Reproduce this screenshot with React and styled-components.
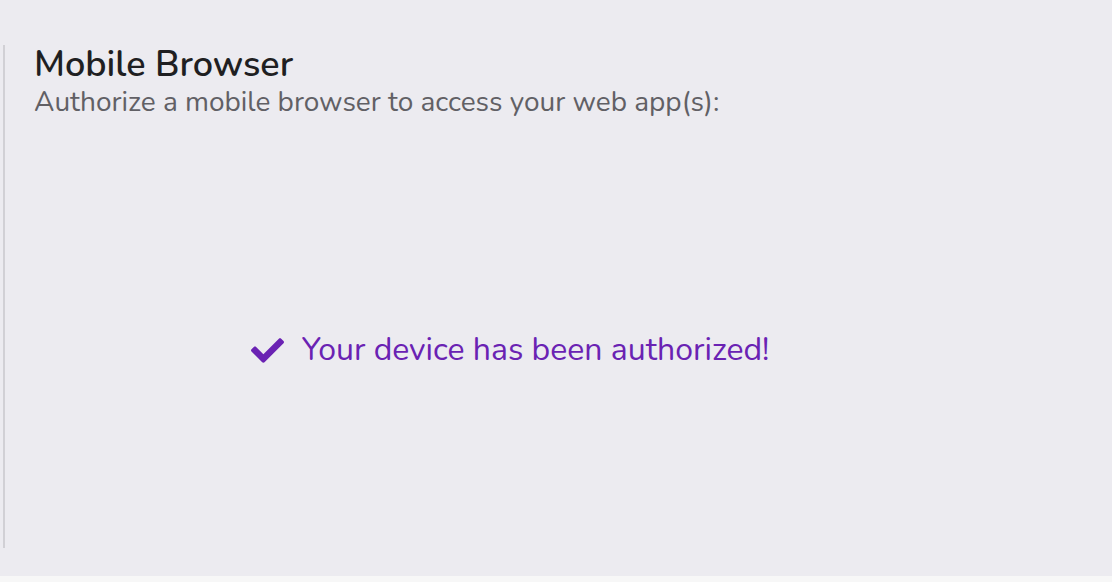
import React from "react";
import styled, { createGlobalStyle } from "styled-components";
import { FaCheck } from "react-icons/fa";

const GlobalStyle = createGlobalStyle`
  html, body {
    margin: 0;
    padding: 0;
    background: #f7f7f7;
    font-family: Nunito, "Noto Sans", "Open Sans", sans-serif;
  }
`;

const Page = styled.div`
  height: 576px;
  background: #ecebf0;
  padding-top: 45px;
  box-sizing: border-box;
`;

const Panel = styled.section`
  margin-left: 3px;
  width: 1010px;
  height: 503px;
  border-left: 2px solid #d1d0d5;
  display: flex;
  flex-direction: column;
`;

const Header = styled.header`
  padding-left: 29px;
  padding-top: 1px;
`;

const Title = styled.h2`
  margin: 0 0 1px;
  font-size: 36px;
  line-height: 38px;
  font-weight: 600;
  color: #1f1f22;
`;

const Subtitle = styled.p`
  margin: 0;
  font-size: 28px;
  line-height: 34px;
  font-weight: 400;
  color: #616065;
`;

const Body = styled.div`
  flex: 1;
  display: flex;
  align-items: center;
  justify-content: center;
  padding-top: 33px;
`;

const Status = styled.div`
  display: flex;
  align-items: center;
  gap: 18px;
  color: #6a22b3;
  font-size: 32px;
  line-height: 38px;
`;

export default function App() {
  return (
    <>
      <GlobalStyle />
      <Page>
        <Panel>
          <Header>
            <Title>Mobile Browser</Title>
            <Subtitle>Authorize a mobile browser to access your web app(s):</Subtitle>
          </Header>
          <Body>
            <Status>
              <FaCheck size={33} />
              <span>Your device has been authorized!</span>
            </Status>
          </Body>
        </Panel>
      </Page>
    </>
  );
}
